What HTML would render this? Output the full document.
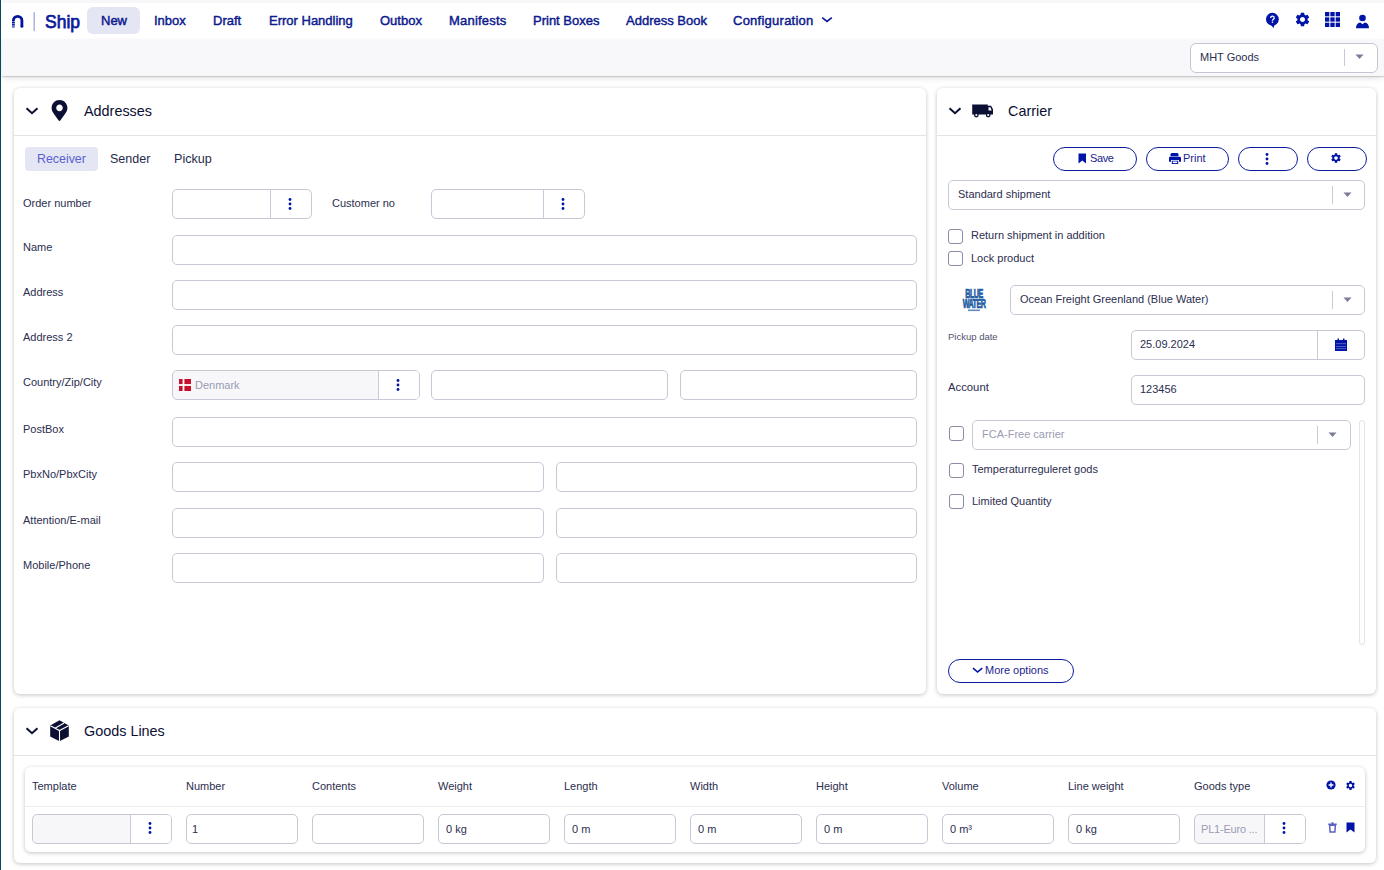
<!DOCTYPE html>
<html><head><meta charset="utf-8">
<style>
*{box-sizing:border-box;margin:0;padding:0}
html,body{width:1384px;height:870px;overflow:hidden;background:#fff;font-family:"Liberation Sans",sans-serif;color:#2b2e4f}
.a{position:absolute}
#lb{left:0;top:0;width:1px;height:870px;background:#0a4862}
#lb2{left:1px;top:0;width:0.3px;height:870px;background:#7fa0b0}
#top{left:2px;top:0;width:1382px;height:3px;background:#f7f7f9}
#hdr{left:2px;top:3px;width:1382px;height:36px;background:#fff}
#band{left:2px;top:39px;width:1382px;height:37px;background:#f8f8fa;box-shadow:0 1px 1px rgba(0,0,0,.14),0 3px 6px -1px rgba(0,0,0,.12)}
.nav{top:3px;height:36px;line-height:36px;font-size:13px;font-weight:400;color:#0c1a8e;white-space:nowrap;-webkit-text-stroke:0.45px #0c1a8e}
.navsel{left:87px;top:7px;width:53px;height:27px;border-radius:6px;background:#e4e6f3}
.card{background:#fff;border-radius:6px;box-shadow:0 1px 4px rgba(0,0,0,.24)}
.title{font-size:14.4px;color:#0b0f33;white-space:nowrap}
.hline{height:1px;background:#e3e3e8}
.lbl{font-size:11px;color:#2b2e4f;white-space:nowrap}
.inp{border:1px solid #c8c9d7;border-radius:5px;background:#fff}
.txt{font-size:11px;color:#2b2e4f;white-space:nowrap;margin-top:-1px}
.btn{border:1.5px solid #0c1c9c;border-radius:13px;background:#fff;font-size:11px;color:#1b238f}
.cb{width:15px;height:15px;border:1.3px solid #8a8ca8;border-radius:3px;background:#fff}
</style></head><body>
<div class="a" id="lb"></div>
<div class="a" id="top"></div>
<div class="a" id="hdr"></div>
<div class="a" id="band"></div>

<svg class="a" style="left:0;top:0" width="100" height="40">
<path d="M13.4 27.6V20.6a4.25 4.25 0 0 1 8.5 0V26.4" fill="none" stroke="#0012a0" stroke-width="2.8"/>
<circle cx="21.9" cy="26.4" r="1.4" fill="#0012a0"/>
<rect x="11" y="21.4" width="5" height="0.55" fill="#fff" opacity=".85"/>
<rect x="11" y="23.2" width="5" height="0.55" fill="#fff" opacity=".85"/>
<rect x="11" y="24.9" width="5" height="0.55" fill="#fff" opacity=".85"/>
<rect x="11" y="26.5" width="5" height="0.55" fill="#fff" opacity=".85"/>
<rect x="33.6" y="12.2" width="1.1" height="19" fill="#8f96d3"/>
</svg>
<div class="a" style="left:45px;top:3.5px;height:36px;line-height:36px;font-size:19px;font-weight:400;color:#0c1a9a;transform:scaleX(.92);transform-origin:0 0;-webkit-text-stroke:0.75px #0c1a9a">Ship</div>
<div class="a navsel"></div>
<div class="a nav" style="left:101px">New</div>
<div class="a nav" style="left:154px">Inbox</div>
<div class="a nav" style="left:213px">Draft</div>
<div class="a nav" style="left:269px">Error Handling</div>
<div class="a nav" style="left:380px">Outbox</div>
<div class="a nav" style="left:449px;letter-spacing:0.2px">Manifests</div>
<div class="a nav" style="left:533px">Print Boxes</div>
<div class="a nav" style="left:626px">Address Book</div>
<div class="a nav" style="left:733px;letter-spacing:0.25px">Configuration</div>
<svg class="a" style="left:820px;top:14px" width="14" height="10"><path d="M2.2 3.6L7 7.5L11.8 3.6" fill="none" stroke="#0c1a9a" stroke-width="1.7"/></svg>

<!-- header icons -->
<svg class="a" style="left:1264px;top:11px" width="17" height="19" viewBox="0 0 17 19">
<circle cx="8.4" cy="8.2" r="6.4" fill="#0014a8"/>
<path d="M6.5 13.5 L9.6 17 L10.5 13.5Z" fill="#0014a8"/>
<path d="M6.7 6.9a1.75 1.75 0 1 1 2.6 1.5c-.6.4-.9.7-.9 1.4" fill="none" stroke="#fff" stroke-width="1.3"/>
<rect x="7.8" y="10.6" width="1.3" height="1.3" fill="#fff"/>
</svg>
<svg class="a" style="left:1294px;top:11px" width="17" height="17" viewBox="0 0 24 24">
<path fill="#0014a8" d="M19.14 12.94c.04-.3.06-.61.06-.94 0-.32-.02-.64-.07-.94l2.03-1.58a.49.49 0 0 0 .12-.61l-1.92-3.32a.488.488 0 0 0-.59-.22l-2.39.96c-.5-.38-1.03-.7-1.62-.94l-.36-2.54a.484.484 0 0 0-.48-.41h-3.84c-.24 0-.43.17-.47.41l-.36 2.54c-.59.24-1.13.57-1.62.94l-2.39-.96c-.22-.08-.47 0-.59.22L2.74 8.87c-.12.21-.08.47.12.61l2.03 1.58c-.05.3-.09.63-.09.94s.02.64.07.94l-2.03 1.58a.49.49 0 0 0-.12.61l1.92 3.32c.12.22.37.29.59.22l2.39-.96c.5.38 1.03.7 1.62.94l.36 2.54c.05.24.24.41.48.41h3.84c.24 0 .44-.17.47-.41l.36-2.54c.59-.24 1.13-.56 1.62-.94l2.39.96c.22.08.47 0 .59-.22l1.92-3.32c.12-.22.07-.47-.12-.61l-2.01-1.58zM12 15.6c-1.98 0-3.6-1.62-3.6-3.6s1.62-3.6 3.6-3.6 3.6 1.62 3.6 3.6-1.62 3.6-3.6 3.6z"/>
</svg>
<svg class="a" style="left:1325px;top:12px" width="15" height="15" viewBox="0 0 15 15" fill="#0014a8">
<rect x="0" y="0" width="4.3" height="4.3"/><rect x="5.35" y="0" width="4.3" height="4.3"/><rect x="10.7" y="0" width="4.3" height="4.3"/>
<rect x="0" y="5.35" width="4.3" height="4.3"/><rect x="5.35" y="5.35" width="4.3" height="4.3"/><rect x="10.7" y="5.35" width="4.3" height="4.3"/>
<rect x="0" y="10.7" width="4.3" height="4.3"/><rect x="5.35" y="10.7" width="4.3" height="4.3"/><rect x="10.7" y="10.7" width="4.3" height="4.3"/>
</svg>
<svg class="a" style="left:1355px;top:14px" width="15" height="15" viewBox="0 0 15 15" fill="#0014a8">
<circle cx="7.5" cy="4" r="3.3"/>
<path d="M1 14.2c0-3 1.6-5.3 4.3-5.6l2.2 1.6 2.2-1.6c2.7.3 4.3 2.6 4.3 5.6z"/>
</svg>
<!-- band select -->
<div class="a inp" style="left:1190px;top:43px;width:188px;height:30px;border-color:#c4c4d6;border-radius:6px"></div>
<div class="a txt" style="left:1200px;top:43px;height:30px;line-height:30px;color:#2b2e4f">MHT Goods</div>
<div class="a" style="left:1344px;top:49px;width:1px;height:17px;background:#c9c9d6"></div>
<svg class="a" style="left:1355px;top:54px" width="10" height="6"><path d="M0.5 0.5h8l-4 4.5z" fill="#7a7d98"/></svg>

<!-- Addresses card -->
<div class="a card" style="left:14px;top:88px;width:912px;height:606px"></div>
<svg class="a" style="left:25px;top:106px" width="14" height="10"><path d="M1.5 2.2l5.5 5 5.5-5" fill="none" stroke="#0b0f33" stroke-width="2"/></svg>
<svg class="a" style="left:51px;top:100px" width="17" height="21" viewBox="0 0 384 512"><path fill="#0b0f33" d="M172.3 501.7C27 291 0 269.4 0 192 0 86 86 0 192 0s192 86 192 192c0 77.4-27 99-172.3 309.7-9.5 13.8-29.9 13.8-39.5 0zM192 272c44.2 0 80-35.8 80-80s-35.8-80-80-80-80 35.8-80 80 35.8 80 80 80z"/></svg>
<div class="a title" style="left:84px;top:101px;height:20px;line-height:20px">Addresses</div>
<div class="a hline" style="left:14px;top:135px;width:912px"></div>
<div class="a" style="left:25px;top:147px;width:73px;height:24px;border-radius:4px;background:#e4e6f3"></div>
<div class="a" style="left:37px;top:147px;height:24px;line-height:24px;font-size:12.4px;color:#5a5fd0">Receiver</div>
<div class="a" style="left:110px;top:147px;height:24px;line-height:24px;font-size:12.5px;color:#262a4a">Sender</div>
<div class="a" style="left:174px;top:147px;height:24px;line-height:24px;font-size:12.6px;color:#262a4a">Pickup</div>
<div class="a lbl" style="left:23px;top:197px">Order number</div><div class="a lbl" style="left:23px;top:241px">Name</div><div class="a lbl" style="left:23px;top:286px">Address</div><div class="a lbl" style="left:23px;top:331px">Address 2</div><div class="a lbl" style="left:23px;top:376px">Country/Zip/City</div><div class="a lbl" style="left:23px;top:423px">PostBox</div><div class="a lbl" style="left:23px;top:468px">PbxNo/PbxCity</div><div class="a lbl" style="left:23px;top:514px">Attention/E-mail</div><div class="a lbl" style="left:23px;top:559px">Mobile/Phone</div><div class="a inp" style="left:172px;top:189px;width:140px;height:30px;"></div><div class="a" style="left:270px;top:190px;width:1px;height:28px;background:#c9c9d9"></div><svg class="a" style="left:288px;top:198px" width="4" height="12"><circle cx="2" cy="1.5" r="1.4" fill="#0014a8"/><circle cx="2" cy="6" r="1.4" fill="#0014a8"/><circle cx="2" cy="10.5" r="1.4" fill="#0014a8"/></svg><div class="a lbl" style="left:332px;top:197px">Customer no</div><div class="a inp" style="left:431px;top:189px;width:154px;height:30px;"></div><div class="a" style="left:543px;top:190px;width:1px;height:28px;background:#c9c9d9"></div><svg class="a" style="left:561px;top:198px" width="4" height="12"><circle cx="2" cy="1.5" r="1.4" fill="#0014a8"/><circle cx="2" cy="6" r="1.4" fill="#0014a8"/><circle cx="2" cy="10.5" r="1.4" fill="#0014a8"/></svg><div class="a inp" style="left:172px;top:235px;width:745px;height:30px;"></div><div class="a inp" style="left:172px;top:280px;width:745px;height:30px;"></div><div class="a inp" style="left:172px;top:325px;width:745px;height:30px;"></div><div class="a inp" style="left:172px;top:417px;width:745px;height:30px;"></div><div class="a inp" style="left:172px;top:370px;width:248px;height:30px;background:#f7f7fa"></div><div class="a" style="left:378px;top:371px;width:41px;height:28px;background:#fff;border-radius:0 4px 4px 0;border-left:1px solid #c9c9d9"></div><svg class="a" style="left:396px;top:379px" width="4" height="12"><circle cx="2" cy="1.5" r="1.4" fill="#0014a8"/><circle cx="2" cy="6" r="1.4" fill="#0014a8"/><circle cx="2" cy="10.5" r="1.4" fill="#0014a8"/></svg><svg class="a" style="left:179px;top:379px" width="12" height="12"><rect width="12" height="12" fill="#c8102e"/><rect x="3.6" width="1.8" height="12" fill="#fff"/><rect y="5.1" width="12" height="1.8" fill="#fff"/></svg><div class="a txt" style="left:195px;top:371px;height:30px;line-height:30px;color:#9a9cb2">Denmark</div><div class="a inp" style="left:431px;top:370px;width:237px;height:30px;"></div><div class="a inp" style="left:680px;top:370px;width:237px;height:30px;"></div><div class="a inp" style="left:172px;top:462px;width:372px;height:30px;"></div><div class="a inp" style="left:556px;top:462px;width:361px;height:30px;"></div><div class="a inp" style="left:172px;top:508px;width:372px;height:30px;"></div><div class="a inp" style="left:556px;top:508px;width:361px;height:30px;"></div><div class="a inp" style="left:172px;top:553px;width:372px;height:30px;"></div><div class="a inp" style="left:556px;top:553px;width:361px;height:30px;"></div>
<!-- Carrier card -->
<div class="a card" style="left:937px;top:88px;width:439px;height:606px"></div>
<svg class="a" style="left:948px;top:106px" width="14" height="10"><path d="M1.5 2.2l5.5 5 5.5-5" fill="none" stroke="#0b0f33" stroke-width="2"/></svg>
<svg class="a" style="left:972px;top:103.5px" width="22" height="14" viewBox="0 0 22 14">
<path fill="#0b0f33" d="M0.2 0.4H15.8V1.8H19.1L21 5.2V10.4H0.2z"/>
<path fill="#fff" d="M16.5 3.2H18.4L19.7 6.6H16.5z"/>
<circle cx="4.3" cy="11" r="2.4" fill="#0b0f33"/><circle cx="4.3" cy="11" r="1.05" fill="#fff"/>
<circle cx="16.2" cy="11" r="2.4" fill="#0b0f33"/><circle cx="16.2" cy="11" r="1.05" fill="#fff"/>
</svg>
<div class="a title" style="left:1008px;top:101px;height:20px;line-height:20px">Carrier</div>
<div class="a hline" style="left:937px;top:135px;width:439px"></div>
<div class="a btn" style="left:1053px;top:147px;width:84px;height:24px"></div>
<svg class="a" style="left:1078px;top:153px" width="9" height="11"><path d="M0.5 0.5h7.5v10l-3.75-3-3.75 3z" fill="#0014a8"/></svg>
<div class="a txt" style="left:1090px;top:147px;height:24px;line-height:24px;color:#1b238f;letter-spacing:-0.4px">Save</div>
<div class="a btn" style="left:1146px;top:147px;width:83px;height:24px"></div>
<svg class="a" style="left:1169px;top:153px" width="12" height="11" viewBox="0 0 12 11"><path fill="#0014a8" d="M2.5 0h6l1 1v2.2h-8V1zM1 3.8h10a1 1 0 0 1 1 1v4h-2V7H2v1.8H0v-4a1 1 0 0 1 1-1zM2.8 7.8h6.4V11H2.8z"/><rect x="3.8" y="8.5" width="4.4" height="1.6" fill="#fff"/></svg>
<div class="a txt" style="left:1183px;top:147px;height:24px;line-height:24px;color:#1b238f">Print</div>
<div class="a btn" style="left:1238px;top:147px;width:60px;height:24px"></div>
<svg class="a" style="left:1265px;top:153px" width="4" height="12"><circle cx="2" cy="1.5" r="1.4" fill="#0014a8"/><circle cx="2" cy="6" r="1.4" fill="#0014a8"/><circle cx="2" cy="10.5" r="1.4" fill="#0014a8"/></svg>
<div class="a btn" style="left:1307px;top:147px;width:60px;height:24px"></div>
<svg class="a" style="left:1330px;top:152px" width="12" height="12" viewBox="0 0 24 24"><path fill="#0014a8" d="M19.14 12.94c.04-.3.06-.61.06-.94 0-.32-.02-.64-.07-.94l2.03-1.58a.49.49 0 0 0 .12-.61l-1.92-3.32a.488.488 0 0 0-.59-.22l-2.39.96c-.5-.38-1.03-.7-1.62-.94l-.36-2.54a.484.484 0 0 0-.48-.41h-3.840c-.24 0-.43.17-.47.41l-.36 2.54c-.59.24-1.13.57-1.62.94l-2.39-.96c-.22-.08-.47 0-.59.22L2.74 8.87c-.12.21-.08.47.12.61l2.03 1.58c-.05.3-.09.63-.09.94s.02.64.07.94l-2.03 1.58a.49.49 0 0 0-.12.61l1.92 3.32c.12.22.37.29.59.22l2.39-.96c.5.38 1.03.7 1.62.94l.36 2.54c.05.24.24.41.48.41h3.84c.24 0 .44-.17.47-.41l.36-2.54c.59-.24 1.130-.56 1.62-.94l2.39.96c.22.08.47 0 .59-.22l1.92-3.32c.12-.22.07-.47-.12-.61l-2.01-1.58zM12 15.6c-1.98 0-3.6-1.620-3.6-3.6s1.62-3.6 3.6-3.6 3.6 1.62 3.6 3.6-1.62 3.6-3.6 3.6z"/></svg>
<div class="a inp" style="left:948px;top:180px;width:417px;height:30px;"></div><div class="a txt" style="left:958px;top:180px;height:30px;line-height:30px;color:#2b2e4f">Standard shipment</div><div class="a" style="left:1332px;top:186px;width:1px;height:18px;background:#c9c9d9"></div><svg class="a" style="left:1343px;top:192px" width="10" height="6"><path d="M0.5 0.5h8l-4 4.5z" fill="#7a7d98"/></svg><div class="a cb" style="left:948px;top:229px"></div><div class="a txt" style="left:971px;top:229px;height:15px;line-height:15px;">Return shipment in addition</div><div class="a cb" style="left:948px;top:251px"></div><div class="a txt" style="left:971px;top:252px;height:15px;line-height:15px;">Lock product</div><svg class="a" style="left:960px;top:287px" width="28" height="26" viewBox="0 0 28 26">
<g transform="translate(14 0) scale(.6 1)" font-family="Liberation Sans" font-weight="700" text-anchor="middle" fill="#1f5ea3" stroke="#1f5ea3" stroke-width="0.7">
<text x="0" y="11.2" font-size="12" letter-spacing="-0.8">BLUE</text>
<text x="0" y="21" font-size="12" letter-spacing="-0.9">WATER</text>
</g>
<rect x="8" y="22.5" width="12" height="1.6" fill="#3d6fae" opacity=".8"/>
</svg><div class="a inp" style="left:1010px;top:285px;width:355px;height:30px;"></div><div class="a txt" style="left:1020px;top:285px;height:30px;line-height:30px;color:#2b2e4f">Ocean Freight Greenland (Blue Water)</div><div class="a" style="left:1332px;top:291px;width:1px;height:18px;background:#c9c9d9"></div><svg class="a" style="left:1343px;top:297px" width="10" height="6"><path d="M0.5 0.5h8l-4 4.5z" fill="#7a7d98"/></svg><div class="a" style="left:948px;top:330px;height:14px;line-height:14px;font-size:9.5px;color:#51546e">Pickup date</div><div class="a inp" style="left:1131px;top:330px;width:234px;height:30px;"></div><div class="a txt" style="left:1140px;top:330px;height:30px;line-height:30px;">25.09.2024</div><div class="a" style="left:1317px;top:331px;width:1px;height:28px;background:#c9c9d9"></div><svg class="a" style="left:1335px;top:338px" width="12" height="13" viewBox="0 0 12 13"><path fill="#0014a8" d="M0 2h12v11H0z"/><rect x="2.5" y="0.5" width="1.5" height="2.5" fill="#0014a8"/><rect x="8" y="0.5" width="1.5" height="2.5" fill="#0014a8"/>
<rect x="1" y="5.5" width="10" height="0.6" fill="#8a90d8"/><rect x="1" y="8" width="10" height="0.6" fill="#8a90d8"/><rect x="1" y="10.5" width="10" height="0.6" fill="#8a90d8"/></svg><div class="a txt" style="left:948px;top:373px;height:30px;line-height:30px;font-size:11.3px">Account</div><div class="a inp" style="left:1131px;top:375px;width:234px;height:30px;"></div><div class="a txt" style="left:1140px;top:375px;height:30px;line-height:30px;">123456</div><div class="a cb" style="left:949px;top:426px"></div><div class="a inp" style="left:972px;top:420px;width:379px;height:30px;"></div><div class="a txt" style="left:982px;top:420px;height:30px;line-height:30px;color:#9a9cb2">FCA-Free carrier</div><div class="a" style="left:1317px;top:426px;width:1px;height:18px;background:#c9c9d9"></div><svg class="a" style="left:1328px;top:432px" width="10" height="6"><path d="M0.5 0.5h8l-4 4.5z" fill="#7a7d98"/></svg><div class="a" style="left:1359px;top:420px;width:6px;height:225px;border:1px solid #e2e2ea;border-radius:3px"></div><div class="a cb" style="left:949px;top:463px"></div><div class="a txt" style="left:972px;top:463px;height:15px;line-height:15px;">Temperaturreguleret gods</div><div class="a cb" style="left:949px;top:494px"></div><div class="a txt" style="left:972px;top:495px;height:15px;line-height:15px;">Limited Quantity</div><div class="a btn" style="left:948px;top:659px;width:126px;height:24px"></div><svg class="a" style="left:971px;top:665px" width="13" height="10"><path d="M2 3.2l4.6 3.8 4.6-3.8" fill="none" stroke="#0014a8" stroke-width="1.6"/></svg><div class="a txt" style="left:985px;top:659px;height:24px;line-height:24px;color:#1b238f">More options</div>
<!-- Goods card -->
<div class="a card" style="left:14px;top:708px;width:1362px;height:155px"></div>
<svg class="a" style="left:25px;top:726px" width="14" height="10"><path d="M1.5 2.2l5.5 5 5.5-5" fill="none" stroke="#0b0f33" stroke-width="2"/></svg>
<svg class="a" style="left:50px;top:719.5px" width="20" height="22" viewBox="0 0 20 22">
<path fill="#0b0f33" d="M9.5 0.3L18.8 5.6V16.6L9.5 21.3L0.2 16.6V5.6z"/>
<path d="M0.4 5.8L9.5 10.6L18.6 5.8M9.5 10.6V21.5M5 8.2L14.1 3" stroke="#fff" stroke-width="1.1" fill="none"/>
</svg>
<div class="a title" style="left:84px;top:721px;height:20px;line-height:20px">Goods Lines</div>
<div class="a hline" style="left:14px;top:755px;width:1362px"></div>
<div class="a" style="left:25px;top:767px;width:1340px;height:85px;background:#fff;border-radius:6px;box-shadow:0 1px 4px rgba(0,0,0,.24)"></div>
<div class="a hline" style="left:25px;top:806px;width:1340px;background:#ececf0"></div>
<div class="a txt" style="left:32px;top:779px;height:16px;line-height:16px;">Template</div><div class="a txt" style="left:186px;top:779px;height:16px;line-height:16px;">Number</div><div class="a txt" style="left:312px;top:779px;height:16px;line-height:16px;">Contents</div><div class="a txt" style="left:438px;top:779px;height:16px;line-height:16px;">Weight</div><div class="a txt" style="left:564px;top:779px;height:16px;line-height:16px;">Length</div><div class="a txt" style="left:690px;top:779px;height:16px;line-height:16px;">Width</div><div class="a txt" style="left:816px;top:779px;height:16px;line-height:16px;">Height</div><div class="a txt" style="left:942px;top:779px;height:16px;line-height:16px;">Volume</div><div class="a txt" style="left:1068px;top:779px;height:16px;line-height:16px;">Line weight</div><div class="a txt" style="left:1194px;top:779px;height:16px;line-height:16px;">Goods type</div><div class="a inp" style="left:32px;top:814px;width:140px;height:30px;background:#f7f7fa"></div><div class="a" style="left:130px;top:815px;width:41px;height:28px;background:#fff;border-radius:0 4px 4px 0;border-left:1px solid #c9c9d9"></div><svg class="a" style="left:148px;top:822px" width="4" height="12"><circle cx="2" cy="1.5" r="1.4" fill="#0014a8"/><circle cx="2" cy="6" r="1.4" fill="#0014a8"/><circle cx="2" cy="10.5" r="1.4" fill="#0014a8"/></svg><div class="a inp" style="left:186px;top:814px;width:112px;height:30px;"></div><div class="a txt" style="left:192px;top:815px;height:30px;line-height:30px;">1</div><div class="a inp" style="left:312px;top:814px;width:112px;height:30px;"></div><div class="a inp" style="left:438px;top:814px;width:112px;height:30px;"></div><div class="a txt" style="left:446px;top:815px;height:30px;line-height:30px;">0 kg</div><div class="a inp" style="left:564px;top:814px;width:112px;height:30px;"></div><div class="a txt" style="left:572px;top:815px;height:30px;line-height:30px;">0 m</div><div class="a inp" style="left:690px;top:814px;width:112px;height:30px;"></div><div class="a txt" style="left:698px;top:815px;height:30px;line-height:30px;">0 m</div><div class="a inp" style="left:816px;top:814px;width:112px;height:30px;"></div><div class="a txt" style="left:824px;top:815px;height:30px;line-height:30px;">0 m</div><div class="a inp" style="left:942px;top:814px;width:112px;height:30px;"></div><div class="a txt" style="left:950px;top:815px;height:30px;line-height:30px;">0 m³</div><div class="a inp" style="left:1068px;top:814px;width:112px;height:30px;"></div><div class="a txt" style="left:1076px;top:815px;height:30px;line-height:30px;">0 kg</div><div class="a inp" style="left:1194px;top:814px;width:112px;height:30px;background:#f7f7fa"></div><div class="a" style="left:1264px;top:815px;width:41px;height:28px;background:#fff;border-radius:0 4px 4px 0;border-left:1px solid #c9c9d9"></div><svg class="a" style="left:1282px;top:822px" width="4" height="12"><circle cx="2" cy="1.5" r="1.4" fill="#0014a8"/><circle cx="2" cy="6" r="1.4" fill="#0014a8"/><circle cx="2" cy="10.5" r="1.4" fill="#0014a8"/></svg><div class="a txt" style="left:1201px;top:815px;height:30px;line-height:30px;color:#9a9cb2;letter-spacing:-0.2px">PL1-Euro ...</div><svg class="a" style="left:1326px;top:780px" width="10" height="10"><circle cx="5" cy="5" r="4.6" fill="#0014a8"/><path d="M5 2.6v4.8M2.6 5h4.8" stroke="#fff" stroke-width="1.3"/></svg><svg class="a" style="left:1345px;top:780px" width="11" height="11" viewBox="0 0 24 24"><path fill="#0014a8" d="M19.14 12.94c.04-.3.06-.61.06-.94 0-.32-.02-.64-.07-.94l2.03-1.58a.49.49 0 0 0 .12-.61l-1.92-3.32a.488.488 0 0 0-.59-.22l-2.39.96c-.5-.38-1.03-.7-1.62-.94l-.36-2.54a.484.484 0 0 0-.48-.41h-3.84c-.24 0-.43.17-.47.41l-.36 2.54c-.59.24-1.13.57-1.62.94l-2.39-.96c-.22-.08-.47 0-.59.22L2.74 8.87c-.12.21-.08.47.12.61l2.03 1.58c-.05.3-.09.63-.09.94s.02.64.07.94l-2.03 1.58a.49.49 0 0 0-.12.61l1.92 3.32c.12.22.37.29.59.22l2.39-.96c.5.38 1.03.7 1.62.94l.36 2.54c.05.24.24.41.48.41h3.84c.24 0 .44-.17.47-.41l.36-2.54c.59-.24 1.13-.56 1.62-.94l2.39.96c.22.08.47 0 .59-.22l1.92-3.32c.12-.22.07-.47-.12-.61l-2.01-1.58zM12 15.6c-1.98 0-3.6-1.62-3.6-3.6s1.62-3.6 3.6-3.6 3.6 1.62 3.6 3.6-1.62 3.6-3.6 3.6z"/></svg><svg class="a" style="left:1327.5px;top:822px" width="9" height="11" viewBox="0 0 9 11"><path d="M3.5 0.3h2v1.2h-2z M0.3 1.5h8.4v1.4H0.3z" fill="#5c63c6"/><path d="M1.6 3.3h5.8l-.5 6.6H2.1z" fill="none" stroke="#5c63c6" stroke-width="1.5"/></svg><svg class="a" style="left:1346px;top:822px" width="9" height="11"><path d="M0.5 0.5h8v10l-4-3-4 3z" fill="#0014a8"/></svg></body></html>
